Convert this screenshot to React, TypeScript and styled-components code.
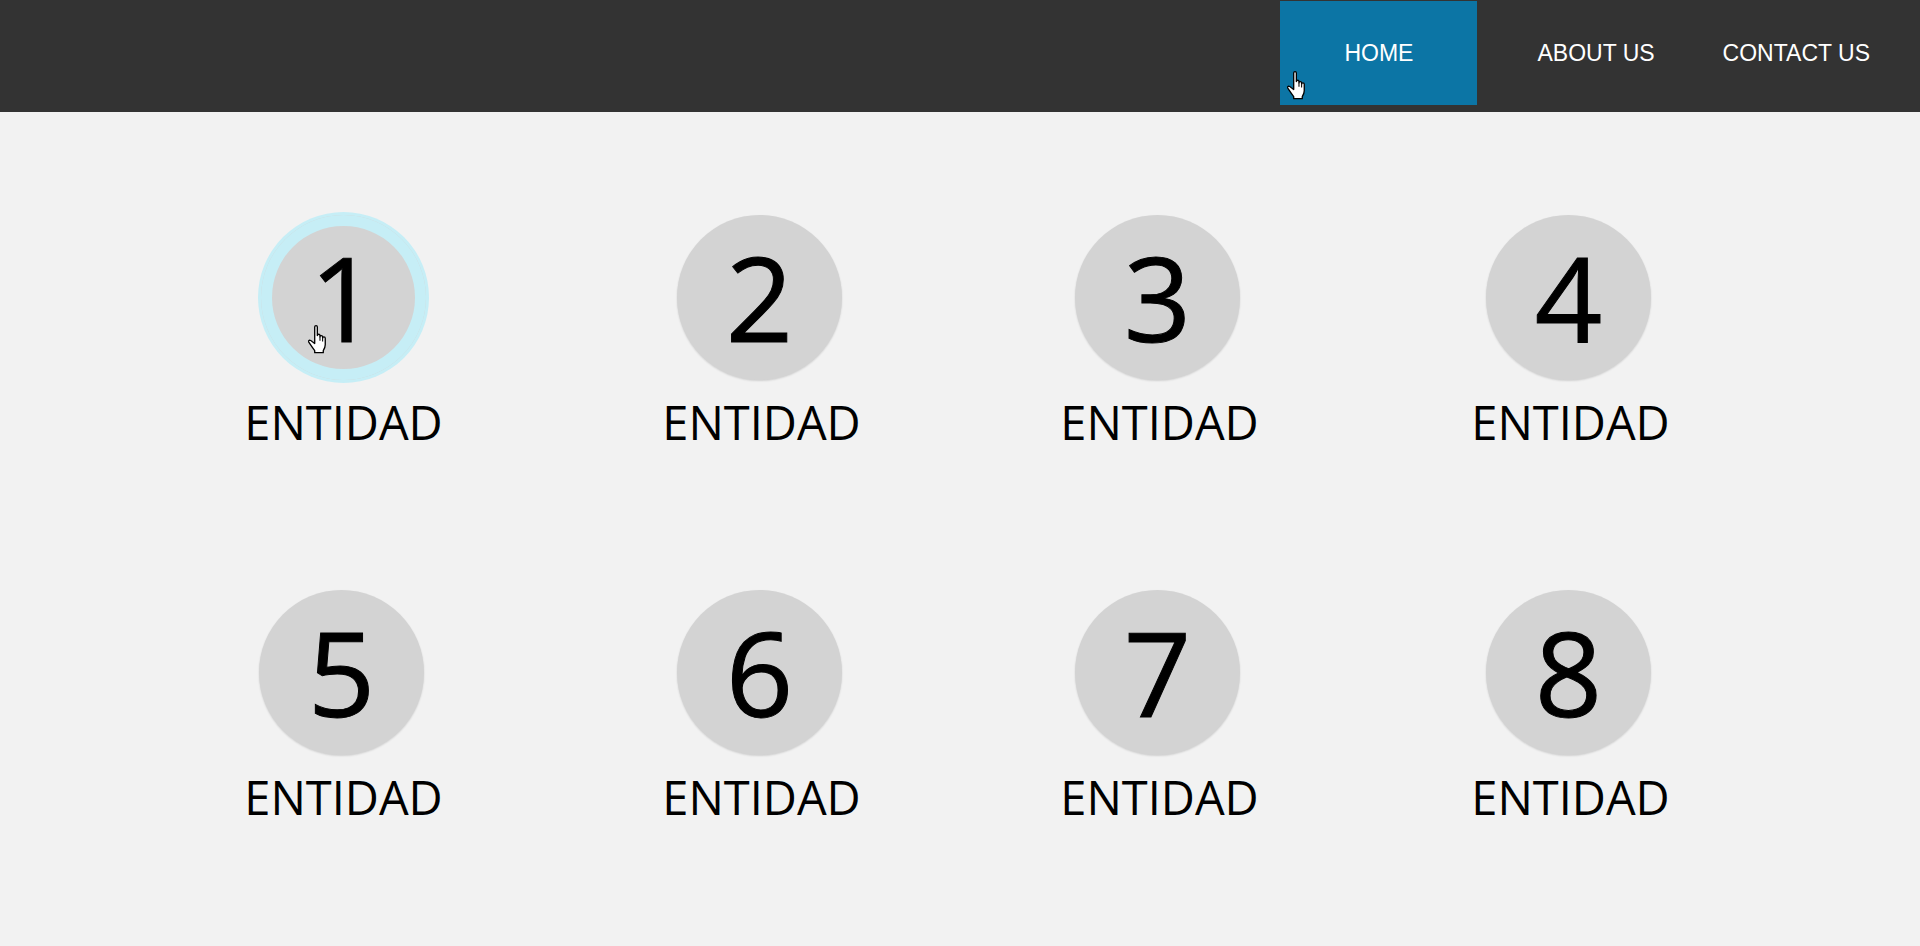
import React from "react";
import styled, { createGlobalStyle, css } from "styled-components";

const GlobalStyle = createGlobalStyle`
  html, body {
    margin: 0;
    padding: 0;
    background: #f2f2f2;
  }
  * { box-sizing: border-box; }
`;

const Page = styled.div`
  min-height: 100vh;
  background: #f2f2f2;
  position: relative;
`;

const Header = styled.header`
  height: 112px;
  background: #333333;
  display: flex;
  justify-content: flex-end;
  align-items: flex-start;
  padding: 1px 16px 0 0;
`;

const NavLink = styled.a<{ $active?: boolean }>`
  position: relative;
  height: 104px;
  display: flex;
  align-items: center;
  padding: 0 34px;
  font-family: "Liberation Sans", Arial, sans-serif;
  font-size: 23px;
  color: #ffffff;
  text-transform: uppercase;
  text-decoration: none;
  white-space: nowrap;
  cursor: pointer;
  ${(p) =>
    p.$active &&
    css`
      background: #0c75a5;
      padding: 0 64px;
      margin-right: 26px;
    `}
`;

const Grid = styled.main`
  display: grid;
  grid-template-columns: 400px 436px 360px 462px;
  row-gap: 138px;
  padding: 103px 0 0 141.5px;
  justify-items: center;
`;

const Item = styled.div`
  position: relative;
  display: flex;
  flex-direction: column;
  align-items: center;
`;

const Circle = styled.div<{ $active?: boolean }>`
  width: 165px;
  height: 165px;
  border-radius: 50%;
  background: #d3d3d3;
  box-shadow: 0 1px 2px rgba(0, 0, 0, 0.14);
  display: flex;
  align-items: center;
  justify-content: center;
  font-family: "Open Sans", "Noto Sans", sans-serif;
  font-size: 118px;
  font-weight: 500;
  line-height: 1;
  color: #000000;
  padding-bottom: 2px;
  -webkit-text-stroke: 1px #000000;
  ${(p) =>
    p.$active &&
    css`
      margin-left: 4px;
      box-shadow: 0 0 0 3px #c6eef6, inset 0 0 0 11px #c6eef6;
    `}
`;

const Label = styled.div`
  margin-top: 12px;
  padding-left: 4px;
  font-family: "Open Sans", "Noto Sans", sans-serif;
  font-size: 47px;
  line-height: 60px;
  color: #000000;
`;

const Cursor = styled.svg<{ $x: number; $y: number }>`
  position: absolute;
  left: ${(p) => p.$x}px;
  top: ${(p) => p.$y}px;
  width: 22px;
  height: 29px;
  pointer-events: none;
`;

const Hand: React.FC<{ x: number; y: number }> = ({ x, y }) => (
  <Cursor $x={x} $y={y} viewBox="0 0 16 22">
    <path
      d="M5.5 1.5 Q5.5 0.5 6.5 0.5 Q7.5 0.5 7.5 1.5 V8 Q7.5 7 8.5 7 Q9.5 7 9.5 8 V9 Q9.5 8 10.5 8 Q11.5 8 11.5 9 V10 Q11.5 9 12.5 9 Q13.5 9 13.5 10 V15 Q13.5 17 12 19.5 V21 H5.5 V19.5 Q3 16 1 13 Q0.5 12 1.5 11.5 Q2.5 11.5 3.5 12.5 L5.5 14 Z"
      fill="#ffffff"
      stroke="#000000"
      strokeWidth="1"
      strokeLinejoin="round"
    />
    <path d="M9.5 9 V12 M11.5 10 V12.5" stroke="#000000" strokeWidth="0.8" fill="none" />
  </Cursor>
);

const items = [1, 2, 3, 4, 5, 6, 7, 8];

export default function App() {
  return (
    <Page>
      <GlobalStyle />
      <Header>
        <NavLink $active>Home</NavLink>
        <NavLink>About us</NavLink>
        <NavLink>Contact us</NavLink>
      </Header>
      <Grid>
        {items.map((n) => (
          <Item key={n}>
            <Circle $active={n === 1}>{n}</Circle>
            <Label>ENTIDAD</Label>
          </Item>
        ))}
      </Grid>
      <Hand x={1286} y={71} />
      <Hand x={307} y={325} />
    </Page>
  );
}
